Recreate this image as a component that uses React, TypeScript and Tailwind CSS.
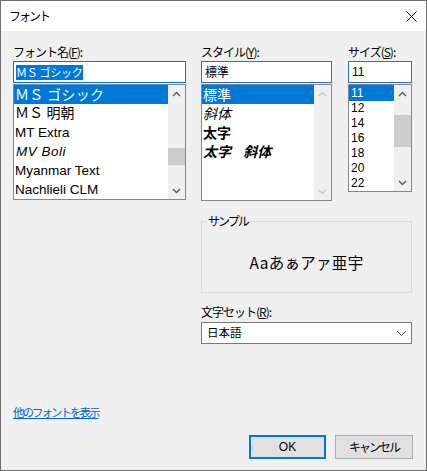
import React from "react";

const JP = "font-['Noto_Sans_CJK_JP','Noto_Sans',sans-serif]";
const LAT = "font-['Liberation_Sans','Noto_Sans_CJK_JP',sans-serif]";

function Chevron({ up, color }: { up?: boolean; color: string }) {
  return (
    <svg width="9" height="6" viewBox="0 0 9 6">
      <polyline
        points={up ? "1,5 4.5,1.5 8,5" : "1,1 4.5,4.5 8,1"}
        fill="none"
        stroke={color}
        strokeWidth="1.5"
      />
    </svg>
  );
}

function ScrollBar({
  thumbTop,
  thumbH,
  disabled,
}: {
  thumbTop?: number;
  thumbH?: number;
  disabled?: boolean;
}) {
  const c = disabled ? "#c8c8c8" : "#606060";
  return (
    <div className="w-[17px] h-full bg-[#f0f0f0] flex flex-col shrink-0">
      <div className="h-[17px] flex items-center justify-center">
        <Chevron up color={c} />
      </div>
      <div className="flex-1 flex flex-col">
        {thumbH ? (
          <div
            className="w-full bg-[#cdcdcd]"
            style={{ marginTop: thumbTop, height: thumbH }}
          />
        ) : null}
      </div>
      <div className="h-[17px] flex items-center justify-center">
        <Chevron color={c} />
      </div>
    </div>
  );
}

function Label({ children }: { children: React.ReactNode }) {
  return (
    <div className={`h-[18px] leading-[18px] text-[12px] text-[#000] tracking-[-1px] ${JP}`}>
      {children}
    </div>
  );
}

export default function App() {
  return (
    <div className={`w-[427px] h-[471px] border border-[#707070] bg-[#f0f0f0] flex flex-col overflow-hidden text-black ${JP}`}>
      {/* title bar */}
      <div className="h-[30px] bg-white flex items-center justify-between pl-[8px] pr-[9px] shrink-0">
        <span className="text-[12px] tracking-[-2px]">フォント</span>
        <svg width="11" height="11" viewBox="0 0 11 11">
          <line x1="0.5" y1="0.5" x2="10.5" y2="10.5" stroke="#000" strokeWidth="1" />
          <line x1="10.5" y1="0.5" x2="0.5" y2="10.5" stroke="#000" strokeWidth="1" />
        </svg>
      </div>

      <div className="flex flex-col pl-[12px] pt-[12px]">
        {/* top row */}
        <div className="flex items-start">
          {/* font name */}
          <div className="w-[173px] flex flex-col">
            <Label>
              フォント名(<span className="underline">F</span>):
            </Label>
            <div className="h-[22px] border border-[#0078d7] bg-white flex items-center pl-[2px]">
              <span className="bg-[#0078d7] text-white text-[11px] leading-[15px] h-[15px] inline-block pr-[1px] tracking-[-0.3px]">
                ＭＳ ゴシック
              </span>
            </div>
            <div className="mt-[1px] h-[116px] border border-[#828790] bg-white flex">
              <div className="flex-1 flex flex-col">
                <div className="h-[19px] bg-[#0078d7] text-white text-[14px] leading-[19px] pl-[1px] tracking-[0.3px] whitespace-nowrap">
                  ＭＳ ゴシック
                </div>
                <div className="h-[19px] text-[14px] leading-[19px] pl-[1px] font-['Liberation_Serif','Noto_Sans_CJK_JP',serif] whitespace-nowrap">
                  ＭＳ 明朝
                </div>
                <div className={`h-[19px] text-[13.5px] leading-[19px] pl-[1px] ${LAT}`}>MT Extra</div>
                <div className={`h-[19px] text-[13.5px] leading-[19px] pl-[2px] italic font-medium tracking-[0.5px] ${LAT}`}>
                  MV Boli
                </div>
                <div className={`h-[19px] text-[13.5px] leading-[19px] pl-[1px] ${LAT}`}>Myanmar Text</div>
                <div className={`h-[19px] text-[13.5px] leading-[19px] pl-[1px] ${LAT}`}>Nachlieli CLM</div>
              </div>
              <ScrollBar thumbTop={46} thumbH={17} />
            </div>
          </div>

          {/* style */}
          <div className="ml-[15px] w-[131px] flex flex-col">
            <Label>
              スタイル(<span className="underline">Y</span>):
            </Label>
            <div className="h-[22px] border border-[#2e6fbf] bg-white flex items-center pl-[3px] text-[12px]">
              標準
            </div>
            <div className="mt-[1px] h-[117px] border border-[#828790] bg-white flex">
              <div className="flex-1 flex flex-col">
                <div className="h-[19px] bg-[#0078d7] text-white text-[14px] leading-[19px] pl-[1px]">標準</div>
                <div className="h-[19px] text-[14px] leading-[19px] pl-[1px] italic">斜体</div>
                <div className="h-[19px] text-[14px] leading-[19px] pl-[1px] font-bold">太字</div>
                <div className="h-[19px] text-[14px] leading-[19px] pl-[1px] font-bold italic [word-spacing:9px]">
                  太字 斜体
                </div>
              </div>
              <ScrollBar disabled />
            </div>
          </div>

          {/* size */}
          <div className="ml-[16px] w-[64px] flex flex-col">
            <Label>
              サイズ(<span className="underline">S</span>):
            </Label>
            <div className={`h-[22px] border border-[#2e6fbf] bg-white flex items-center pl-[3px] text-[12px] ${LAT}`}>
              11
            </div>
            <div className="mt-[1px] h-[108px] border border-[#828790] bg-white flex">
              <div className={`flex-1 flex flex-col text-[12px] ${LAT}`}>
                <div className="h-[16px] leading-[16px] bg-[#0078d7] text-white pl-[2px]">11</div>
                {["12", "14", "16", "18", "20", "22"].map((s) => (
                  <div key={s} className="h-[15px] leading-[15px] pl-[2px]">
                    {s}
                  </div>
                ))}
              </div>
              <ScrollBar thumbTop={13} thumbH={32} />
            </div>
          </div>
        </div>

        {/* sample & charset */}
        <div className="ml-[188px] w-[211px] mt-[20px] flex flex-col">
          <div className="relative h-[72px] border border-[#dcdcdc] flex items-center justify-center pt-[10px]">
            <span className="absolute -top-[9px] left-[5px] px-[1px] bg-[#f0f0f0] text-[12px] leading-[16px] tracking-[-2px]">
              サンプル
            </span>
            <span className="text-[15.5px] leading-[20px] tracking-[0.3px] text-black">Aaあぁアァ亜宇</span>
          </div>
          <div className="mt-[10px]">
            <Label>
              文字セット(<span className="underline">R</span>):
            </Label>
          </div>
          <div className="mt-[1px] h-[22px] border border-[#7a7a7a] bg-white flex items-center justify-between pl-[5px] pr-[4px] text-[11.5px]">
            <span>日本語</span>
            <svg width="11" height="7" viewBox="0 0 11 7">
              <polyline points="1,1 5.5,5.5 10,1" fill="none" stroke="#505050" strokeWidth="1" />
            </svg>
          </div>
        </div>

        {/* link */}
        <div className="mt-[60px] h-[16px] leading-[16px] text-[11.5px] text-[#0066cc] underline tracking-[-2px]">
          他のフォントを表示
        </div>

        {/* buttons */}
        <div className="mt-[15px] flex justify-end gap-[9px] pr-[13px]">
          <div className="w-[77px] h-[24px] border-2 border-[#0078d7] bg-[#e1e1e1] flex items-center justify-center text-[12px]">
            <span className={LAT}>OK</span>
          </div>
          <div className="w-[78px] h-[24px] border border-[#adadad] bg-[#e1e1e1] flex items-center justify-center text-[12px] tracking-[-2px]">
            キャンセル
          </div>
        </div>
      </div>
    </div>
  );
}
